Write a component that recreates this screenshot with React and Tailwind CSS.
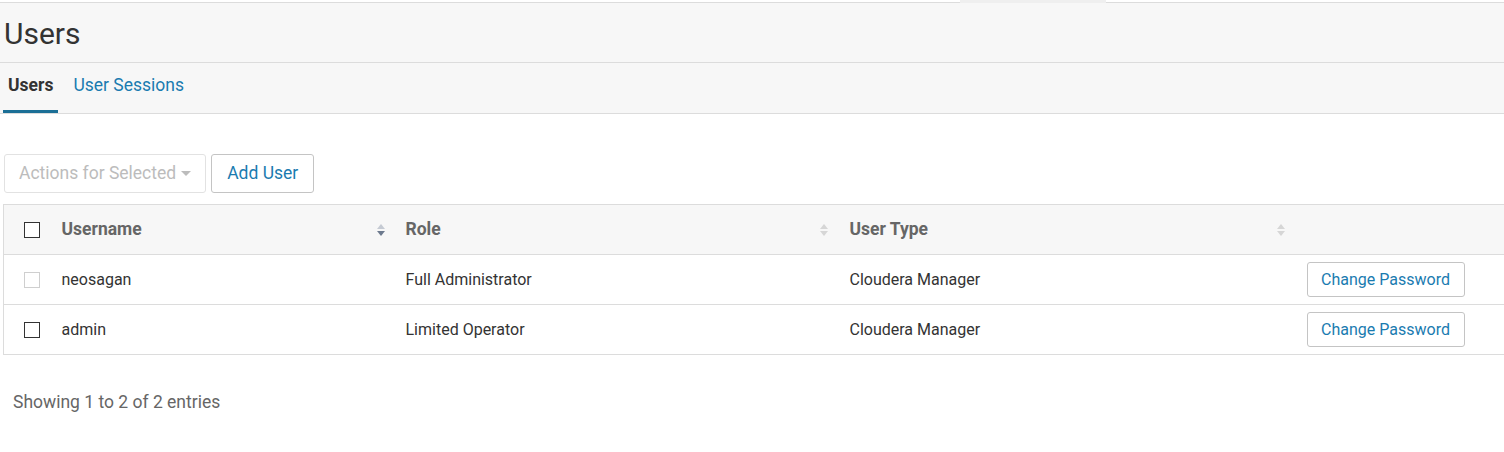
import React from 'react'

const users = [
  { name: 'neosagan', role: 'Full Administrator', type: 'Cloudera Manager', disabled: true },
  { name: 'admin', role: 'Limited Operator', type: 'Cloudera Manager', disabled: false },
]

function SortIcon({ active }) {
  return (
    <svg width="8" height="12" viewBox="0 0 8 12" className="shrink-0">
      <path d="M4 0 L8 5 L0 5 Z" fill={active ? '#c5cad3' : '#d6d6d6'} />
      <path d="M4 12 L8 7 L0 7 Z" fill={active ? '#6d7a8e' : '#d6d6d6'} />
    </svg>
  )
}

function Checkbox({ disabled }) {
  return (
    <div
      className={`w-4 h-4 bg-white border ${disabled ? 'border-[#cfcfcf]' : 'border-[#333] border-[1.5px]'}`}
    />
  )
}

export default function App() {
  return (
    <div className="w-[1504px] h-[452px] overflow-hidden bg-white font-['Roboto',sans-serif]">
      {/* top rule */}
      <div className="h-[3px] flex">
        <div className="w-[960px] border-b border-[#dcdcdc] bg-white"></div>
        <div className="w-[146px] bg-[#efefef]"></div>
        <div className="flex-1 border-b border-[#dcdcdc] bg-white"></div>
      </div>

      {/* page header */}
      <div className="bg-[#f7f7f7] h-[60px] border-b border-[#dcdcdc] flex items-center px-1">
        <h1 className="text-[30px] text-[#333] leading-none pt-[3px]">Users</h1>
      </div>

      {/* tabs */}
      <div className="bg-[#f7f7f7] h-[51px] border-b border-[#dcdcdc] flex items-end pl-[3px]">
        <div className="flex">
          <div className="px-[5px] h-[50px] flex items-center border-b-[3px] border-[#1b6f96] text-[17.5px] font-bold text-[#333] pb-[2px]">
            Users
          </div>
          <div className="pl-[15px] h-[50px] flex items-center text-[17.5px] text-[#1a7bb0] pb-[5px]">
            User Sessions
          </div>
        </div>
      </div>

      {/* toolbar */}
      <div className="flex gap-[5px] pl-1 pt-[40px] pb-[11px]">
        <button className="h-[39px] px-[14px] border border-[#e2e2e2] rounded-[3px] text-[17.5px] text-[#bcbcbc] flex items-center gap-[5px] bg-white">
          Actions for Selected
          <span className="w-0 h-0 border-l-[5px] border-r-[5px] border-t-[5px] border-l-transparent border-r-transparent border-t-[#bcbcbc]"></span>
        </button>
        <button className="h-[39px] px-[15px] border border-[#c4c4c4] rounded-[3px] text-[17.5px] text-[#1a7bb0] bg-white">
          Add User
        </button>
      </div>

      {/* table */}
      <div className="pl-[3px]">
        <table className="w-[1520px] border-collapse table-fixed">
          <colgroup>
            <col className="w-[43px]" />
            <col className="w-[344px]" />
            <col className="w-[444px]" />
            <col className="w-[457px]" />
            <col />
          </colgroup>
          <thead>
            <tr className="bg-[#f7f7f7] h-[50px] border border-[#dcdcdc]">
              <th className="pl-[20px]">
                <Checkbox />
              </th>
              <th className="pl-[15px] pr-[6px] text-left">
                <div className="flex items-center justify-between text-[17.5px] font-bold text-[#666]">
                  Username <SortIcon active />
                </div>
              </th>
              <th className="pl-[15px] pr-[7px] text-left">
                <div className="flex items-center justify-between text-[17.5px] font-bold text-[#666]">
                  Role <SortIcon />
                </div>
              </th>
              <th className="pl-[15px] pr-[7px] text-left">
                <div className="flex items-center justify-between text-[17.5px] font-bold text-[#666]">
                  User Type <SortIcon />
                </div>
              </th>
              <th></th>
            </tr>
          </thead>
          <tbody>
            {users.map(u => (
              <tr key={u.name} className="h-[50px] border border-[#dcdcdc] text-[16px] text-[#333]">
                <td className="pl-[20px]">
                  <Checkbox disabled={u.disabled} />
                </td>
                <td className="pl-[15px]">{u.name}</td>
                <td className="pl-[15px]">{u.role}</td>
                <td className="pl-[15px]">{u.type}</td>
                <td className="pl-[15px]">
                  <button className="h-[35px] w-[158px] border border-[#c4c4c4] rounded-[3px] text-[16px] text-[#1a7bb0] bg-white">
                    Change Password
                  </button>
                </td>
              </tr>
            ))}
          </tbody>
        </table>
      </div>

      <div className="pl-[13px] pt-[34px] text-[17.5px] text-[#666]">
        Showing 1 to 2 of 2 entries
      </div>
    </div>
  )
}
